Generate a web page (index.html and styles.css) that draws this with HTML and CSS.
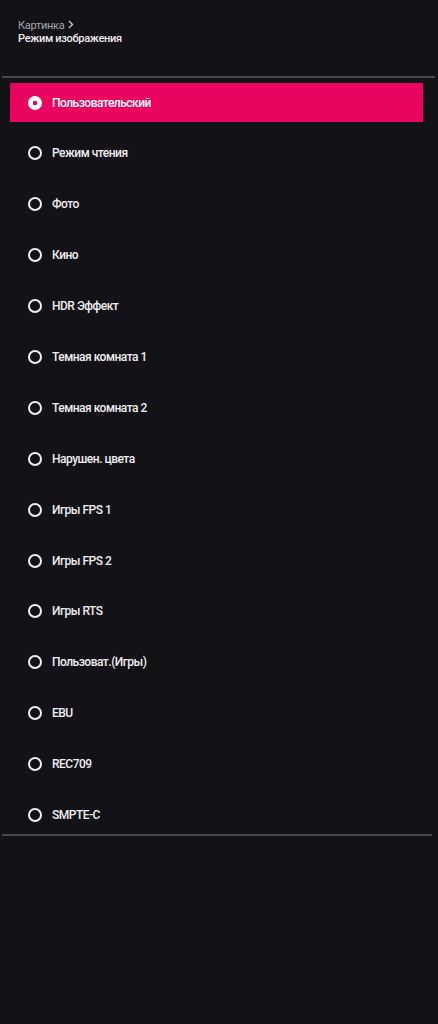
FILE: index.html
```html
<!DOCTYPE html>
<html lang="ru">
<head>
    <meta charset="UTF-8">
    <meta name="viewport" content="width=device-width, initial-scale=1.0">
    <title>Режим изображения</title>
    <link rel="stylesheet" href="styles.css">
</head>
<body>
    <div class="header">
        <div class="crumb">Картинка
            <svg class="chev" width="6" height="9" viewBox="0 0 6 9"><path d="M1 1l3.5 3.5L1 8" fill="none" stroke="#c9c7cc" stroke-width="1.4"/></svg>
        </div>
        <div class="title">Режим изображения</div>
    </div>
    <div class="divider"></div>
    <ul class="modes">
        <li class="mode active"><span class="radio"></span>Пользовательский</li>
        <li class="mode"><span class="radio"></span>Режим чтения</li>
        <li class="mode"><span class="radio"></span>Фото</li>
        <li class="mode"><span class="radio"></span>Кино</li>
        <li class="mode"><span class="radio"></span>HDR Эффект</li>
        <li class="mode"><span class="radio"></span>Темная комната 1</li>
        <li class="mode"><span class="radio"></span>Темная комната 2</li>
        <li class="mode"><span class="radio"></span>Нарушен. цвета</li>
        <li class="mode"><span class="radio"></span>Игры FPS 1</li>
        <li class="mode"><span class="radio"></span>Игры FPS 2</li>
        <li class="mode"><span class="radio"></span>Игры RTS</li>
        <li class="mode"><span class="radio"></span>Пользоват.(Игры)</li>
        <li class="mode"><span class="radio"></span>EBU</li>
        <li class="mode"><span class="radio"></span>REC709</li>
        <li class="mode"><span class="radio"></span>SMPTE-C</li>
    </ul>
    <div class="divider bottom"></div>
</body>
</html>
```

FILE: styles.css
```css
body {
    margin: 0;
    background-color: #131216;
    font-family: Roboto, 'Liberation Sans', sans-serif;
    color: #f2f0f3;
    height: 1024px;
}
.header {
    padding: 19px 18px 0;
    height: 56px;
    box-sizing: border-box;
    font-size: 11px;
    line-height: 13px;
    letter-spacing: -0.3px;
}
.crumb {
    color: #a8a6ab;
}
.chev {
    margin-left: 1px;
}
.title {
    color: #eeecef;
    font-weight: 500;
}
.divider {
    height: 2px;
    margin: 20px 3px 0 2px;
    background-color: #48474b;
}
.divider.bottom {
    margin: 0 6px 0 2px;
}
.modes {
    list-style: none;
    margin: 5px 15px 0 10px;
    padding: 0;
    display: flex;
    flex-direction: column;
    gap: 11.9px;
}
.mode {
    height: 39px;
    display: flex;
    align-items: center;
    padding-left: 18px;
    font-size: 12px;
    font-weight: 500;
    letter-spacing: -0.5px;
    color: #f0eef1;
}
.mode.active {
    background-color: #e8045f;
    color: #fff;
}
.radio {
    width: 10px;
    height: 10px;
    border: 2px solid #f0eef1;
    border-radius: 50%;
    margin-right: 10px;
    flex-shrink: 0;
}
.mode.active .radio {
    border-color: #fff;
    background: radial-gradient(circle, #e8045f 0 2px, #fff 2.5px);
}
```
